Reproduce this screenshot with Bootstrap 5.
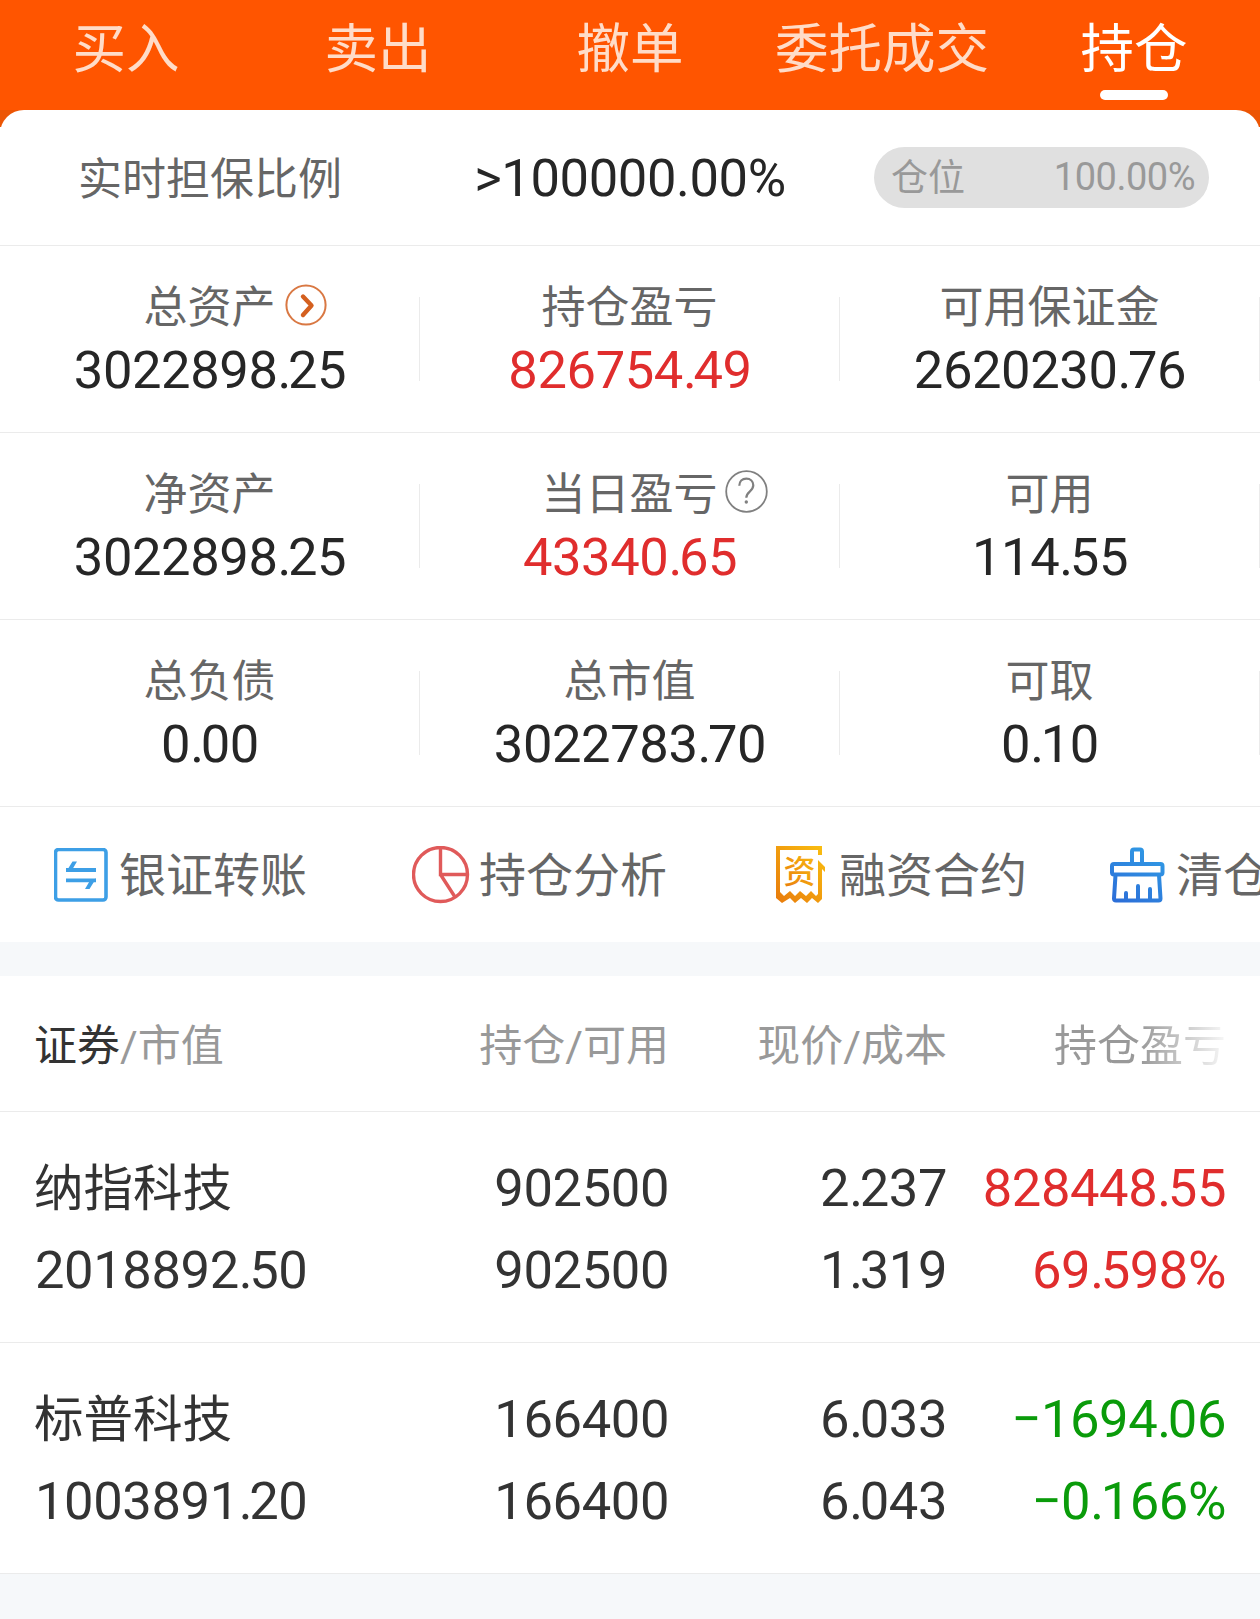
<!DOCTYPE html>
<html lang="zh-CN">
<head>
<meta charset="utf-8">
<meta name="viewport" content="width=device-width, initial-scale=1">
<title>持仓</title>
<link rel="stylesheet" href="https://cdn.jsdelivr.net/npm/bootstrap@5.3.0/dist/css/bootstrap.min.css">
<style>
  body { font-family: Roboto, "Noto Sans CJK SC", sans-serif; background: #f6f8fa; color: #262626; overflow-x: hidden; }
  .app { width: 1260px; height: 1619px; overflow: hidden; }
  .tabs-bar { height: 110px; background: #ff5500; }
  .tabs-bar .nav-link { flex: 1 1 0; min-width: 0; height: 110px; padding: 20px 0 0; font-size: 53.5px; line-height: 60px; color: #ffdcc8; white-space: nowrap; }
  .tabs-bar .nav-link.active { color: #fff; }
  .tabs-bar .nav-link.active::after { content: ""; display: block; width: 68px; height: 10px; margin: 10px auto 0; border-radius: 5px; background: #fff; }
  .corner-back { background: linear-gradient(#ec5504 17px, #fff 17px); }
  .sheet { border-radius: 24px 24px 0 0; }
  .ratio-row { height: 136px; border-bottom: 1px solid #ebebeb; }
  .ratio-row .label-text { padding-top: 4px; }
  .label-text { font-size: 44px; line-height: 60px; color: #666; }
  .num { font-size: 52.5px; line-height: 64px; letter-spacing: -.4px; }
  .dot { letter-spacing: -3.4px; }
  .pill { width: 335px; height: 61px; margin-left: 34px; padding: 0 14px 0 17px; background: #e0e0e0; color: #999; font-size: 37px; line-height: 61px; }
  .pill .pill-name { padding-top: 1px; }
  .pill .pill-value { font-size: 38px; letter-spacing: -.5px; }
  .stat-row { height: 187px; border-bottom: 1px solid #ebebeb; }
  .stat { padding-top: 32px; }
  .stat .label-text { margin-left: -1px; }
  .stat:not(:last-child) { background: linear-gradient(#ebebeb, #ebebeb) 100% 51px / 1px 84px no-repeat; }
  .stat:last-child { background: linear-gradient(#ebebeb, #ebebeb) 100% 51px / 1px 84px no-repeat; }
  .hang { width: 0; overflow: visible; }
  .hang svg { flex: none; margin-top: -7px; }
  .red { color: #e02d2d; }
  .green { color: #0a9b0a; }
  .tools { height: 135px; padding-left: 54px; font-size: 47px; line-height: 60px; color: #666; white-space: nowrap; overflow: hidden; }
  .tool { flex: none; }
  .tool span { padding-top: 3px; }
  .gap-band { height: 34px; background: #f6f8fa; }
  .hold-grid { display: grid; grid-template-columns: 334px 300px 278px 279px; padding-left: 35px; }
  .hold-head { height: 136px; padding-top: 40px; font-size: 43px; line-height: 60px; color: #999; border-bottom: 1px solid #ebebeb; }
  .hold-head > div:first-child { margin-left: -1px; }
  .fade-out { background: linear-gradient(90deg, #999 50%, #f8f8f8 100%); -webkit-background-clip: text; background-clip: text; color: transparent; }
  .hold-row { height: 231px; padding-top: 35px; color: #333; border-bottom: 1px solid #ebebeb; }
  .hold-row .num { line-height: 82px; }
  .stock { font-size: 49.5px; line-height: 84px; margin-bottom: -2px; margin-left: -1px; }
</style>
</head>
<body>
<div class="app">
  <nav class="tabs-bar nav flex-nowrap text-center">
    <a class="nav-link" href="#">买入</a>
    <a class="nav-link" href="#">卖出</a>
    <a class="nav-link" href="#">撤单</a>
    <a class="nav-link" href="#">委托成交</a>
    <a class="nav-link active" href="#">持仓</a>
  </nav>

  <div class="corner-back">
    <section class="sheet bg-white">
      <div class="ratio-row row g-0 align-items-center text-center">
        <div class="col label-text">实时担保比例</div>
        <div class="col num">&gt;100000.00%</div>
        <div class="col"><div class="pill rounded-pill d-flex justify-content-between"><span class="pill-name">仓位</span><span class="pill-value">100.00%</span></div></div>
      </div>

      <div class="stat-row row g-0 text-center">
        <div class="stat col">
          <div class="label-text d-flex justify-content-center align-items-center">总资产
            <span class="hang d-flex"><svg style="margin-left:9px" width="42" height="42" viewBox="0 0 42 42" fill="none"><circle cx="21" cy="21" r="19.6" stroke="#d97843" stroke-width="2"/><path d="M18 12.500 26.500 21.500 18 31" stroke="#d4601f" stroke-width="4.400" stroke-linecap="round" stroke-linejoin="round"/></svg></span>
          </div>
          <div class="num">3022898<span class="dot">.</span>25</div>
        </div>
        <div class="stat col"><div class="label-text">持仓盈亏</div><div class="num red">826754<span class="dot">.</span>49</div></div>
        <div class="stat col"><div class="label-text">可用保证金</div><div class="num">2620230<span class="dot">.</span>76</div></div>
      </div>

      <div class="stat-row row g-0 text-center">
        <div class="stat col"><div class="label-text">净资产</div><div class="num">3022898<span class="dot">.</span>25</div></div>
        <div class="stat col">
          <div class="label-text d-flex justify-content-center align-items-center">当日盈亏
            <span class="hang d-flex"><svg style="margin-left:7px" width="43" height="43" viewBox="0 0 43 43" fill="none" stroke="#808080"><circle cx="21.500" cy="21.500" r="20.300" stroke-width="1.800"/><path d="M14.300 15.800c0-4.300 2.900-7.200 7-7.200s7 2.700 7 6.700c0 3-1.600 4.600-3.800 6.500-2.200 1.900-3.200 3.200-3.200 6" stroke-width="2.200"/><circle cx="21.300" cy="32" r="1.700" fill="#808080" stroke="none"/></svg></span>
          </div>
          <div class="num red">43340<span class="dot">.</span>65</div>
        </div>
        <div class="stat col"><div class="label-text">可用</div><div class="num">114<span class="dot">.</span>55</div></div>
      </div>

      <div class="stat-row row g-0 text-center">
        <div class="stat col"><div class="label-text">总负债</div><div class="num">0<span class="dot">.</span>00</div></div>
        <div class="stat col"><div class="label-text">总市值</div><div class="num">3022783<span class="dot">.</span>70</div></div>
        <div class="stat col"><div class="label-text">可取</div><div class="num">0<span class="dot">.</span>10</div></div>
      </div>

      <div class="tools d-flex align-items-center">
        <div class="tool d-flex align-items-center" style="width:358px">
          <svg width="54" height="54" viewBox="0 0 54 54" fill="none" stroke="#3d9fe6"><rect x="1.500" y="1.500" width="50.500" height="50.500" rx="3" stroke-width="3.600"/><path d="M12 24 18.500 13.500h4.500L18 22zM42 30.500 35.500 41H31l5-8.500z" fill="#3d9fe6" stroke="none"/><path d="M12 22H42M12 32.300H42" stroke-width="3.800"/></svg>
          <span style="margin-left:11px">银证转账</span>
        </div>
        <div class="tool d-flex align-items-center" style="width:364px">
          <svg width="58" height="58" viewBox="0 0 58 58" fill="none" stroke="#e05a5a" stroke-width="3.400"><circle cx="28.500" cy="28.500" r="27"/><path d="M28.500 2V28.500H55M28.500 28.500 43 51"/></svg>
          <span style="margin-left:9px">持仓分析</span>
        </div>
        <div class="tool d-flex align-items-center" style="width:334px">
          <svg width="50" height="58" viewBox="0 0 50 58"><defs><linearGradient id="gold" x1="0" y1="1" x2="1" y2="0"><stop offset="0" stop-color="#e87a0c"/><stop offset="1" stop-color="#fac010"/></linearGradient></defs><path fill="url(#gold)" d="M0 0H46V9H42V4H4V46L8 50 14 45 19 50 24 45 30 50 35 45 40 50 42 48V14L49 21V26L46 23V53L42 57 36 52 31 57 25 52 19 57 14 52 6 57 0 52Z"/><text x="7.500" y="37" font-size="32" font-weight="500" fill="url(#gold)" font-family="Noto Sans CJK SC, sans-serif">资</text></svg>
          <span style="margin-left:13px">融资合约</span>
        </div>
        <div class="tool d-flex align-items-center">
          <svg width="55" height="56" viewBox="0 0 55 56" fill="none" stroke="url(#blue)" stroke-width="4" stroke-linecap="round" stroke-linejoin="round"><defs><linearGradient id="blue" gradientUnits="userSpaceOnUse" x1="10" y1="55" x2="40" y2="5"><stop offset="0" stop-color="#2c6fd8"/><stop offset="1" stop-color="#3097e4"/></linearGradient></defs><path d="M22 15V4.500Q22 2.500 24 2.500H30Q32 2.500 32 4.500V15M4 17H50.500Q52.500 17 52.500 19V25.500Q52.500 27.500 50.500 27.500H4Q2 27.500 2 25.500V19Q2 17 4 17ZM5.500 28 4 51.500Q4 53.500 6 53.500H48.500Q50.500 53.500 50.500 51.500L49 28M16 46V53M28 39V53M40 42V53"/></svg>
          <span style="margin-left:11px">清仓</span>
        </div>
      </div>
    </section>
  </div>

  <div class="gap-band"></div>

  <section class="bg-white">
    <div class="hold-grid hold-head text-end">
      <div class="text-start"><span style="color:#333">证券</span>/市值</div>
      <div>持仓/可用</div>
      <div>现价/成本</div>
      <div><span class="fade-out">持仓盈亏</span></div>
    </div>
    <div class="hold-grid hold-row text-end">
      <div class="text-start"><div class="stock">纳指科技</div><div class="num">2018892<span class="dot">.</span>50</div></div>
      <div class="num"><div>902500</div><div>902500</div></div>
      <div class="num"><div>2<span class="dot">.</span>237</div><div>1<span class="dot">.</span>319</div></div>
      <div class="num red"><div>828448<span class="dot">.</span>55</div><div>69<span class="dot">.</span>598%</div></div>
    </div>
    <div class="hold-grid hold-row text-end">
      <div class="text-start"><div class="stock">标普科技</div><div class="num">1003891<span class="dot">.</span>20</div></div>
      <div class="num"><div>166400</div><div>166400</div></div>
      <div class="num"><div>6<span class="dot">.</span>033</div><div>6<span class="dot">.</span>043</div></div>
      <div class="num green"><div>−1694<span class="dot">.</span>06</div><div>−0<span class="dot">.</span>166%</div></div>
    </div>
  </section>
</div>
<script src="https://cdn.jsdelivr.net/npm/bootstrap@5.3.0/dist/js/bootstrap.bundle.min.js"></script>
</body>
</html>
